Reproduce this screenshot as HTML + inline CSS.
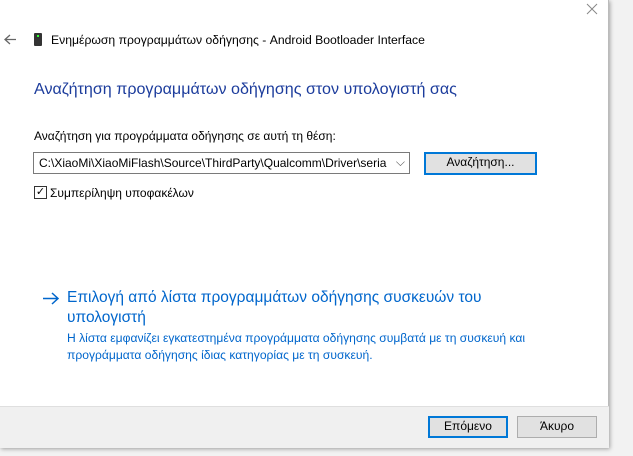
<!DOCTYPE html>
<html><head><meta charset="utf-8"><style>
*{margin:0;padding:0;box-sizing:border-box}
body{width:633px;height:456px;background:#f2f2f2;font-family:"Liberation Sans",sans-serif;position:relative;overflow:hidden;font-size:12px;color:#000}
.win{position:absolute;left:0;top:0;width:609px;height:448px;background:#fff;box-shadow:1px 1px 4px rgba(0,0,0,.35);border-right:1px solid #bbb;border-bottom:1px solid #bbb}
.foot{position:absolute;left:0;top:406px;width:609px;height:42px;background:#f0f0f0;border-top:1px solid #dfdfdf}
.a{position:absolute;white-space:nowrap}
.btn{position:absolute;background:#e1e1e1;border:1px solid #adadad;text-align:center;font-size:12px;line-height:19px}
.blue{border:2px solid #0078d7;line-height:17px}
</style></head><body>
<div class="win">
<svg class="a" style="left:586px;top:3px" width="12" height="12"><path d="M1 1L11 11M11 1L1 11" stroke="#888" stroke-width="1"/></svg>
<svg class="a" style="left:4px;top:34px" width="13" height="11"><path d="M1 5.5H12M6 1L1 5.5L6 10" stroke="#666" stroke-width="1.3" fill="none"/></svg>
<div class="a" style="left:34px;top:33px;width:8px;height:13px;background:#333;border-radius:1px"><div style="position:absolute;left:3px;top:2px;width:2px;height:2px;background:#3f3"></div></div>
<div class="a" style="left:51px;top:33px;font-size:12.2px">Ενημέρωση προγραμμάτων οδήγησης - Android Bootloader Interface</div>
<div class="a" style="left:34px;top:80px;font-size:16.1px;color:#1c3c9c">Αναζήτηση προγραμμάτων οδήγησης στον υπολογιστή σας</div>
<div class="a" style="left:34px;top:129px">Αναζήτηση για προγράμματα οδήγησης σε αυτή τη θέση:</div>
<div class="a" style="left:33px;top:152px;width:377px;height:22px;border:1px solid #7a7a7a;padding:3px 0 0 5px;overflow:hidden">C:\XiaoMi\XiaoMiFlash\Source\ThirdParty\Qualcomm\Driver\seria<span style="position:absolute;right:4px;top:2px;color:#555">⌵</span></div>
<div class="btn blue" style="left:424px;top:152px;width:113px;height:23px">Αναζήτηση...</div>
<div class="a" style="left:34px;top:186px;width:13px;height:13px;border:1px solid #333;font-size:11px;line-height:11px;text-align:center">✓</div>
<div class="a" style="left:50px;top:186px">Συμπερίληψη υποφακέλων</div>
<svg class="a" style="left:42px;top:292px" width="18" height="13"><path d="M1 6.5H16M10 1L16 6.5L10 12" stroke="#0066cc" stroke-width="1.5" fill="none"/></svg>
<div class="a" style="left:67px;top:288px;font-size:15.5px;color:#0066cc;line-height:20px">Επιλογή από λίστα προγραμμάτων οδήγησης συσκευών του<br>υπολογιστή</div>
<div class="a" style="left:67px;top:330px;font-size:12.1px;color:#0066cc;line-height:17px">Η λίστα εμφανίζει εγκατεστημένα προγράμματα οδήγησης συμβατά με τη συσκευή και<br>προγράμματα οδήγησης ίδιας κατηγορίας με τη συσκευή.</div>
<div class="foot"></div>
<div class="btn blue" style="left:428px;top:416px;width:80px;height:22px">Επόμενο</div>
<div class="btn" style="left:517px;top:416px;width:80px;height:22px">Άκυρο</div>
</div>
</body></html>
